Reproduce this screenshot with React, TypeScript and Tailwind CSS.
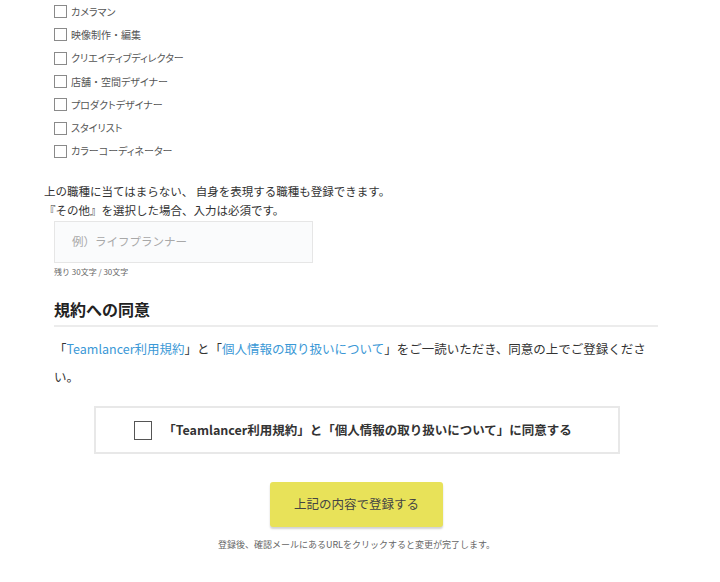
import React from "react";

const jobs: string[][] = [
  ["カメラマン"],
  ["映像制作", "編集"],
  ["クリエイティブディレクター"],
  ["店舗", "空間デザイナー"],
  ["プロダクトデザイナー"],
  ["スタイリスト"],
  ["カラーコーディネーター"],
];

export default function App() {
  return (
    <div
      className="w-[720px] h-[582px] bg-white overflow-hidden text-[#333]"
      style={{ fontFamily: '"Noto Sans CJK JP", "Noto Sans", sans-serif' }}
    >
      <div className="flex flex-col pl-[54px]">
        {jobs.map((parts) => (
          <div key={parts.join("・")} className="flex items-center h-[23.3px]">
            <span className="w-[13px] h-[13px] border border-[#8a8a8a] bg-white shrink-0" />
            <span className="ml-[4px] text-[10px] text-[#555] leading-none">
              {parts.map((p, i) => (
                <React.Fragment key={p}>
                  {i > 0 && <span>・</span>}
                  <span className="[font-feature-settings:'palt']">{p}</span>
                </React.Fragment>
              ))}
            </span>
          </div>
        ))}
      </div>

      <div className="mt-[19px] pl-[44px] text-[11.5px] leading-[19px] text-[#333]">
        <p>上の職種に当てはまらない、 自身を表現する職種も登録できます。</p>
        <p>『その他』を選択した場合、入力は必須です。</p>
      </div>

      <div className="pl-[54px] mt-[1px]">
        <div className="w-[259px] h-[42px] border border-[#e6e6e6] bg-[#fafbfc] flex items-center pl-[17px] text-[11.5px] text-[#a8a8a8]">
          例）ライフプランナー
        </div>
        <p className="mt-[3px] text-[8px] leading-[12px] text-[#666]">残り 30文字 / 30文字</p>
      </div>

      <div className="mx-[54px] w-[604px] mt-[19px]">
        <h2 className="text-[16px] font-bold leading-[24px] text-[#222]">規約への同意</h2>
        <div className="mt-[4px] h-[2px] bg-[#ececec]" />
        <p className="mt-[8px] text-[12.5px] leading-[28px] text-[#333]">
          <span>「</span>
          <span className="text-[#3a98d6]">Teamlancer利用規約</span>
          <span>」と「</span>
          <span className="text-[#3a98d6]">個人情報の取り扱いについて</span>
          <span>」をご一読いただき、同意の上でご登録ください。</span>
        </p>
      </div>

      <div className="ml-[94px] mt-[15px] w-[526px] h-[48px] border-2 border-[#e8e8e8] flex items-center justify-center pr-[8px]">
        <span className="w-[18px] h-[19px] border border-[#555] bg-white shrink-0" />
        <span className="ml-[11px] text-[12.5px] font-bold text-[#333]">
          「Teamlancer利用規約」と「個人情報の取り扱いについて」に同意する
        </span>
      </div>

      <div className="flex flex-col items-center mt-[28px] pr-[7px]">
        <button className="w-[173px] h-[45px] rounded-[3px] bg-[#e8e259] text-[12.5px] text-[#444] shadow-[0_2px_2px_rgba(0,0,0,0.18)]">
          上記の内容で登録する
        </button>
        <p className="mt-[11px] text-[9px] leading-[14px] text-[#666]">
          登録後、確認メールにあるURLをクリックすると変更が完了します。
        </p>
      </div>
    </div>
  );
}
